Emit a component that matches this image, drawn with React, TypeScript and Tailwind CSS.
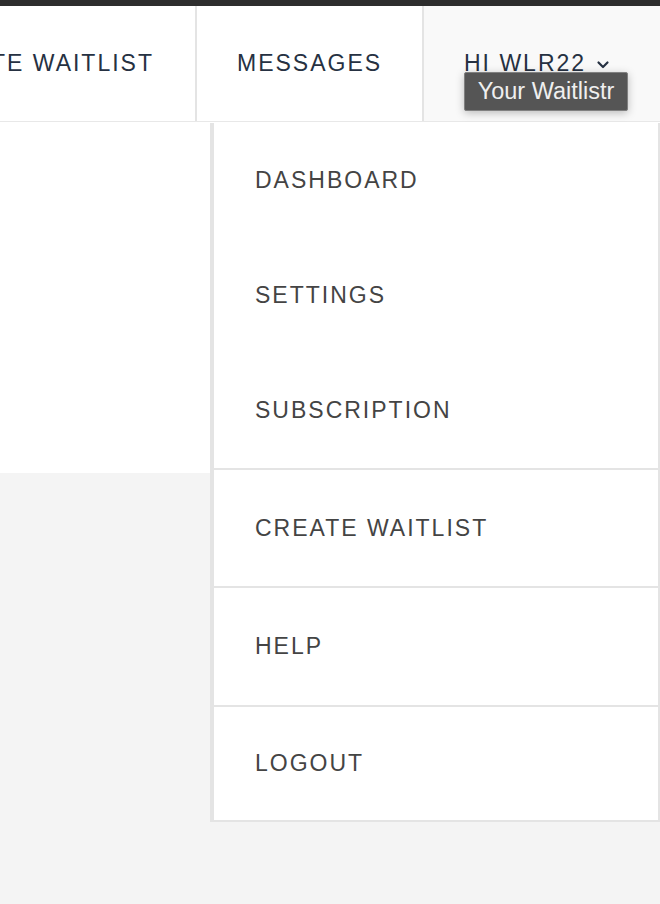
import React from "react";

const F = { fontFamily: '"Liberation Sans", Arial, sans-serif' };

export default function App() {
  const menuTop = ["DASHBOARD", "SETTINGS", "SUBSCRIPTION"];
  return (
    <div className="relative w-[660px] h-[904px] overflow-hidden bg-[#f4f4f4]" style={F}>
      <div className="h-[6px] bg-[#2d2d2d]" />
      <header className="flex justify-end h-[116px] bg-white overflow-hidden border-b border-[#e8e8e8]">
        <div className="shrink-0 flex items-center pl-10 pr-[41px] text-[23px] tracking-[2px] text-[#263142]">
          CREATE WAITLIST
        </div>
        <div className="shrink-0 w-[227px] flex items-center pl-10 border-l-2 border-[#e4e4e4] text-[23px] tracking-[2px] text-[#263142]">
          MESSAGES
        </div>
        <div className="relative shrink-0 w-[238px] flex items-center pl-10 border-l-2 border-[#e4e4e4] bg-[#f9f9f9] text-[23px] tracking-[2px] text-[#263142]">
          <span>HI WLR22</span>
          <svg className="ml-[10px] mt-[2px]" width="14" height="14" viewBox="0 0 14 14" fill="none">
            <path d="M2.5 4.5 L7 9 L11.5 4.5" stroke="#263142" strokeWidth="2.2" strokeLinecap="round" strokeLinejoin="round" />
          </svg>
        </div>
      </header>
      <div className="h-[351px] bg-white" />

      <div className="absolute top-[72px] left-[464px] w-[164px] h-[39px] flex items-center justify-center bg-[#555555] border border-[#808080] rounded-[2px] shadow-[0_2px_8px_rgba(0,0,0,0.25)] text-[23.5px] text-[#efefef]">
        Your Waitlistr
      </div>

      <nav className="absolute top-[123px] left-[210px] w-[450px] bg-white border-l-4 border-r-2 border-b-2 border-[#e4e4e4] text-[#444444]">
        {menuTop.map((t) => (
          <div key={t} className="h-[115px] flex items-center pl-[41px] text-[23px] tracking-[2px]">
            {t}
          </div>
        ))}
        <div className="h-[118px] flex items-center pl-[41px] text-[23px] tracking-[2px] border-t-2 border-[#e4e4e4]">
          CREATE WAITLIST
        </div>
        <div className="h-[119px] flex items-center pl-[41px] text-[23px] tracking-[2px] border-t-2 border-[#e4e4e4]">
          HELP
        </div>
        <div className="h-[115px] flex items-center pl-[41px] text-[23px] tracking-[2px] border-t-2 border-[#e4e4e4]">
          LOGOUT
        </div>
      </nav>
    </div>
  );
}
